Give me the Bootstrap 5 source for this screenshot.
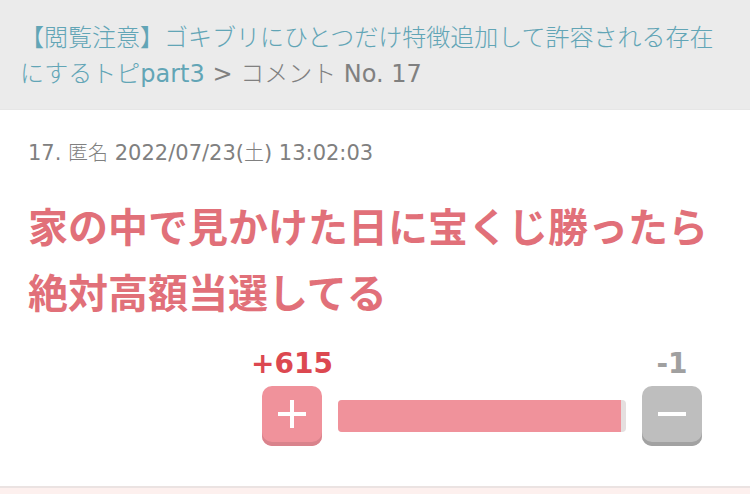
<!DOCTYPE html>
<html lang="ja">
<head>
<meta charset="utf-8">
<meta name="viewport" content="width=device-width, initial-scale=1">
<title>コメント No. 17</title>
<link href="https://cdn.jsdelivr.net/npm/bootstrap@5.3.0/dist/css/bootstrap.min.css" rel="stylesheet">
<style>
body { font-family: "DejaVu Sans", "Noto Sans CJK JP", sans-serif; color: #808080; background: #fff; }
.topic-path { background: #ebebeb; font-size: 24px; line-height: 36px; padding: 20px 20px 17px; border-bottom: 1px solid #e6e6e6; font-weight: 300; }
.topic-path a { color: #62a5b6; }
.comment { padding: 26px 28px 40px; border-bottom: 2px solid #ebe3e2; }
.meta { font-size: 20px; line-height: 34px; font-weight: 300; }
.meta .fw-normal { font-size: 21px; }
.message { font-size: 40px; line-height: 66px; color: #e17079; margin: 22px 0 24px; font-family: "Noto Sans CJK JP", sans-serif; }
.votes { padding-right: 20px; gap: 16px; }
.vote { width: 60px; }
.count { font-size: 28px; line-height: 32px; margin-bottom: 6px; }
.plus-count { color: #dc4850; }
.minus-count { color: #a0a0a0; }
.vote-btn { width: 60px; height: 60px; border-radius: 10px; border: 0; }
.btn-plus { background: #f0929b; box-shadow: inset 0 -4px #d9838c; }
.btn-minus { background: #bebebe; box-shadow: inset 0 -4px #a2a2a2; }
.meter { width: 288px; height: 32px; margin-bottom: 14px; border-radius: 4px; background: #e5dfdf; }
.meter .progress-bar { background: #f0929b; }
.next { background: #fdf0ee; min-height: 6px; }
</style>
</head>
<body>
<nav class="topic-path" aria-label="breadcrumb"><a href="#" class="text-decoration-none">【閲覧注意】ゴキブリにひとつだけ特徴追加して許容される存在にするトピ<span class="fw-normal">part3</span></a> <span class="fw-normal">&gt;</span> コメント <span class="fw-normal">No. 17</span></nav>
<main>
<article class="comment">
<div class="meta"><span class="fw-normal">17. </span>匿名<span class="fw-normal"> 2022/07/23(</span>土<span class="fw-normal">) 13:02:03</span></div>
<p class="message fw-bold">家の中で見かけた日に宝くじ勝ったら絶対高額当選してる</p>
<div class="votes d-flex justify-content-end align-items-end">
<div class="vote d-flex flex-column align-items-center"><span class="count plus-count fw-bold">+615</span><button type="button" class="vote-btn btn-plus d-flex align-items-center justify-content-center p-0" aria-label="プラス"><svg width="28" height="32" viewBox="0 0 28 32"><path d="M14 0v28M0 14h28" stroke="#fff" stroke-width="4"/></svg></button></div>
<div class="meter progress"><div class="progress-bar" style="width:98.4%"></div></div>
<div class="vote d-flex flex-column align-items-center"><span class="count minus-count fw-bold">-1</span><button type="button" class="vote-btn btn-minus d-flex align-items-center justify-content-center p-0" aria-label="マイナス"><svg width="28" height="32" viewBox="0 0 28 32"><path d="M0 14h28" stroke="#fff" stroke-width="4"/></svg></button></div>
</div>
</article>
</main>
<div class="next"></div>
</body>
</html>
